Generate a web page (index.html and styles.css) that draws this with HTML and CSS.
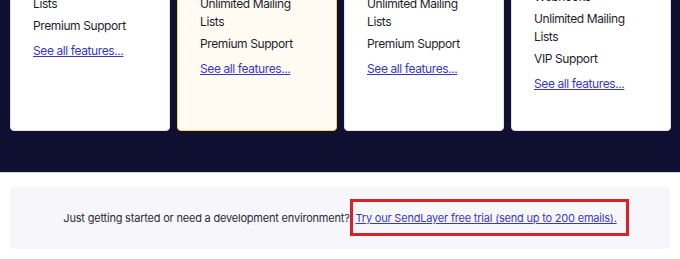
FILE: index.html
```html
<!DOCTYPE html>
<html lang="en">
<head>
<meta charset="utf-8">
<link rel="stylesheet" href="styles.css">
</head>
<body>
<section class="pricing">
  <div class="cards">
    <div class="card card-a">
      <ul class="features">
        <li>Unlimited Mailing Lists</li>
        <li>Premium Support</li>
      </ul>
      <a class="more" href="#">See all features...</a>
    </div>
    <div class="card card-b featured">
      <ul class="features">
        <li>Unlimited Mailing Lists</li>
        <li>Premium Support</li>
      </ul>
      <a class="more" href="#">See all features...</a>
    </div>
    <div class="card card-b">
      <ul class="features">
        <li>Unlimited Mailing Lists</li>
        <li>Premium Support</li>
      </ul>
      <a class="more" href="#">See all features...</a>
    </div>
    <div class="card card-d">
      <ul class="features">
        <li>Webhooks</li>
        <li>Unlimited Mailing Lists</li>
        <li>VIP Support</li>
      </ul>
      <a class="more" href="#">See all features...</a>
    </div>
  </div>
</section>
<div class="trial-wrap">
  <div class="trial">
    <p>Just getting started or need a development environment? <a class="trial-link" href="#">Try our SendLayer free trial (send up to 200 emails).</a></p>
  </div>
</div>
</body>
</html>
```
FILE: styles.css
```css
* { box-sizing: border-box; }
html, body {
  margin: 0;
  padding: 0;
  background: #ffffff;
  font-family: Inter, "Noto Sans", sans-serif;
  color: #1e1e2c;
}
.pricing {
  margin-top: -40px;
  background: #0f0f32;
  padding: 0 10px 41px;
  border-bottom: 1px solid #d6d7de;
}
.cards {
  display: grid;
  grid-template-columns: repeat(4, 160px);
  column-gap: 7px;
  height: 171px;
}
.card {
  background: #ffffff;
  border: 1px solid #e3e4ec;
  border-radius: 4px;
  padding-left: 22px;
  padding-right: 30px;
  font-size: 12px;
  letter-spacing: -0.4px;
  line-height: 18px;
}
.card.featured {
  background: #fffbf2;
  border-color: #f2d65a;
}
.card-a { padding-top: 16px; }
.card-b { padding-top: 34px; }
.card-d { padding-top: 27px; }
.features {
  list-style: none;
  margin: 0;
  padding: 0;
}
.features li { margin-bottom: 4px; }
.features li:last-child { margin-bottom: 0; }
.more {
  display: inline-block;
  margin-top: 7px;
  color: #3a37c2;
  text-decoration: underline;
}
.trial-wrap {
  padding: 14px 10px 10px;
}
.trial {
  height: 62px;
  padding-left: 9px;
  background: #f7f7fb;
  border-radius: 4px;
  display: flex;
  align-items: center;
  justify-content: center;
}
.trial p {
  margin: 0;
  font-size: 11px;
  letter-spacing: -0.2px;
  color: #2a2a38;
}
.trial-link {
  color: #3a37c2;
  text-decoration: underline;
  outline: 3px solid #dd1f26;
  outline-offset: 0;
  padding: 9px 9px 8px 3px;
}
```
